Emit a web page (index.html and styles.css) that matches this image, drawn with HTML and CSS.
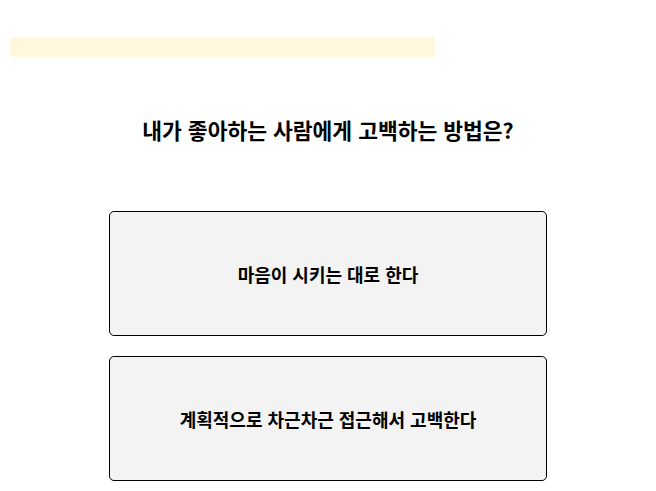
FILE: index.html
```html
<!DOCTYPE html>
<html lang="ko">
<head>
    <meta charset="UTF-8">
    <meta name="viewport" content="width=device-width, initial-scale=1.0">
    <title>고백 테스트</title>
    <link rel="stylesheet" href="styles.css">
</head>
<body>
    <div class="progress">
        <div class="progress-fill" style="width: 66.8%"></div>
    </div>
    <h1 class="question">내가 좋아하는 사람에게 고백하는 방법은?</h1>
    <div class="answers">
        <button class="answer">마음이 시키는 대로 한다</button>
        <button class="answer">계획적으로 차근차근 접근해서 고백한다</button>
    </div>
</body>
</html>
```

FILE: styles.css
```css
body {
    margin: 0;
    padding: 0;
    background-color: #ffffff;
    font-family: "Noto Sans CJK KR", "Noto Sans", sans-serif;
    color: #000000;
}

.progress {
    margin: 37px 10px 0;
    height: 20px;
}

.progress-fill {
    height: 100%;
    background-color: #fff8dc;
    border-radius: 4px 0 0 4px;
}

.question {
    margin: 57px 0 0;
    font-size: 21.5px;
    line-height: 32px;
    font-weight: 700;
    text-align: center;
}

.answers {
    display: flex;
    flex-direction: column;
    align-items: center;
    gap: 20px;
    margin-top: 65px;
}

.answer {
    width: 438px;
    height: 125px;
    background-color: #f3f3f3;
    border: 1px solid #000000;
    border-radius: 5px;
    font-family: inherit;
    font-size: 18px;
    font-weight: 700;
    color: #000000;
    cursor: pointer;
}
```
